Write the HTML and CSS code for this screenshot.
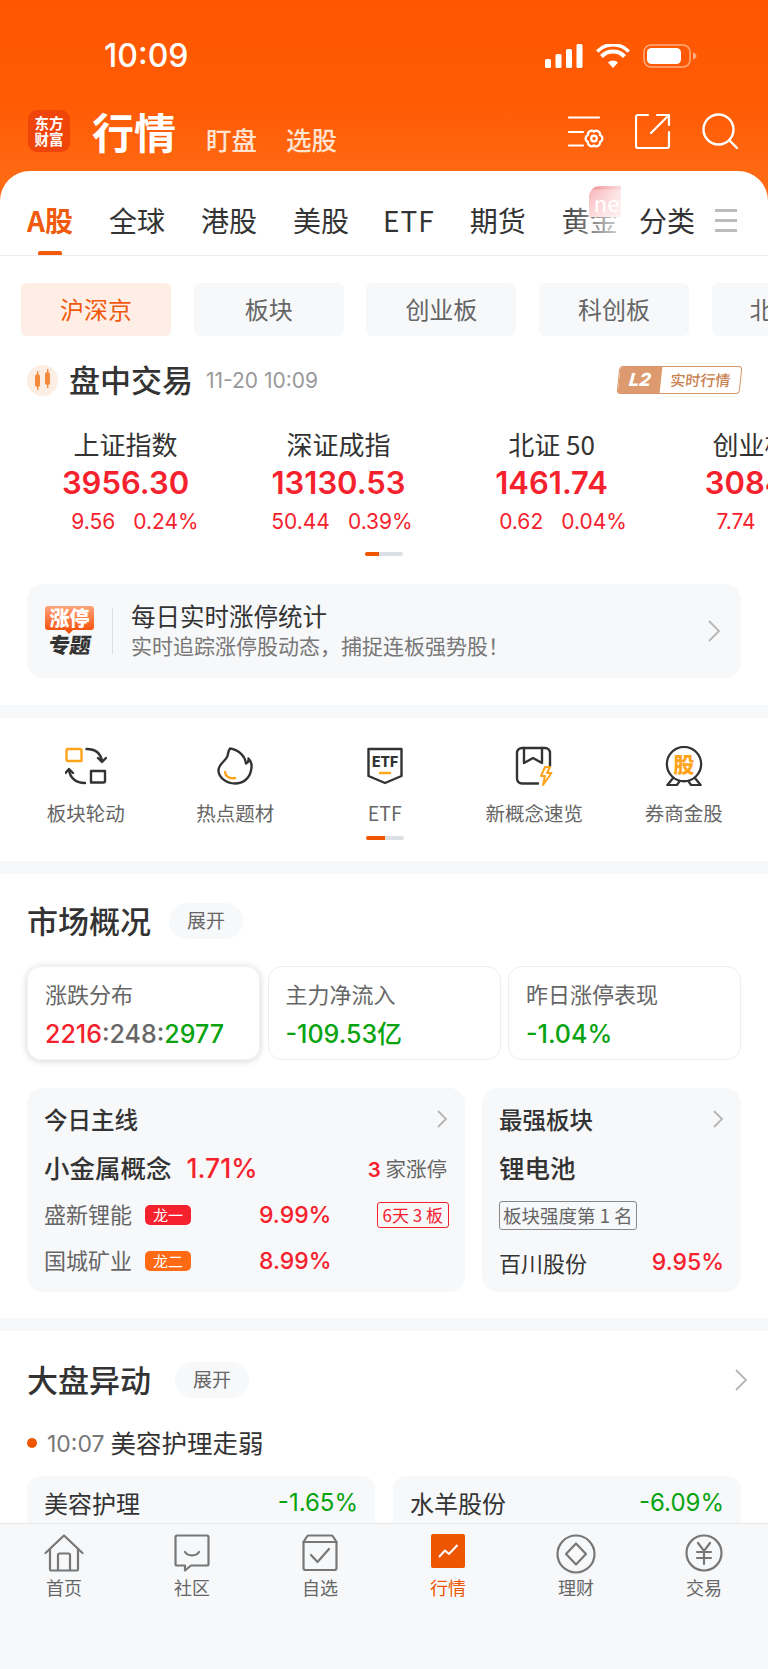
FILE: index.html
```html
<!DOCTYPE html>
<html lang="zh-CN">
<head>
    <meta charset="UTF-8">
    <meta name="viewport" content="width=device-width, initial-scale=1.0">
    <title>行情</title>
    <link rel="stylesheet" href="styles.css">
</head>
<body>
<div class="app">
    <div class="top">
        <div class="status-bar">
            <span class="status-time">10:09</span>
            <div class="status-icons">
                <svg width="38" height="24" viewBox="0 0 38 24"><rect x="0" y="15" width="6" height="9" rx="1.5"/><rect x="10.500" y="10" width="6" height="14" rx="1.500"/><rect x="21" y="5" width="6" height="19" rx="1.500"/><rect x="31.500" y="0" width="6" height="24" rx="1.500"/></svg>
                <svg width="34" height="24" viewBox="0 0 34 24"><path d="M17 24 12 18.500a7 7 0 0 1 10 0Z"/><path d="M5.500 12.500a16 16 0 0 1 23 0" fill="none" stroke="#fff" stroke-width="4"/><path d="M1.200 7.500C10 -1.500 24 -1.500 32.800 7.500" fill="none" stroke="#fff" stroke-width="3.600"/></svg>
                <svg width="54" height="24" viewBox="0 0 54 24"><rect x="1" y="1" width="46" height="22" rx="7" fill="none" stroke="#fff" stroke-opacity=".5" stroke-width="1.500"/><rect x="4" y="4" width="34" height="16" rx="4.500"/><path d="M50 8.500c2.500.7 3.500 2 3.500 3.500s-1 2.800-3.500 3.500Z" fill-opacity=".5"/></svg>
            </div>
        </div>
        <div class="title-bar">
            <div class="logo"><span>东方</span><span>财富</span></div>
            <h1>行情</h1>
            <a class="title-link">盯盘</a>
            <a class="title-link">选股</a>
            <div class="title-icons">
                <svg class="icon-filter" width="36" height="33" viewBox="0 0 36 33" fill="none" stroke="#fff" stroke-width="2.200" stroke-linecap="round"><path d="M1 1.500h30M1 16h14M1 29.500h14"/><path d="M26 15.500A3.800 3.800 0 0 1 32.060 19A3.800 3.800 0 0 1 32.060 26A3.800 3.800 0 0 1 26 29.500A3.800 3.800 0 0 1 19.940 26A3.800 3.800 0 0 1 19.940 19A3.800 3.800 0 0 1 26 15.500Z"/><circle cx="26" cy="22.500" r="2.800"/></svg>
                <svg width="36" height="36" viewBox="0 0 36 36" fill="none" stroke="#fff" stroke-width="2.200" stroke-linecap="round" stroke-linejoin="round"><path d="M13 2H3a2 2 0 0 0-2 2v29a2 2 0 0 0 2 2h29a2 2 0 0 0 2-2V19"/><path d="M16 20 34 2M22 2h12v10" /></svg>
                <svg width="36" height="36" viewBox="0 0 36 36" fill="none" stroke="#fff" stroke-width="2.400" stroke-linecap="round"><circle cx="16.500" cy="16.500" r="15"/><path d="m27.500 27.500 7.500 7.500"/></svg>
            </div>
        </div>
        <div class="tabs">
            <div class="tabs-scroll">
                <div class="tab active">A股<i class="tab-mark"></i></div>
                <div class="tab">全球</div>
                <div class="tab">港股</div>
                <div class="tab">美股</div>
                <div class="tab tab-etf">ETF</div>
                <div class="tab">期货</div>
                <div class="tab tab-gold">黄金<span class="new-badge">new</span></div>
                <div class="tabs-fade"></div>
            </div>
            <div class="tab tab-fixed">分类</div>
            <div class="tab-menu"><i></i><i></i><i></i></div>
        </div>
    </div>

    <div class="main">
        <div class="chips">
            <div class="chip active">沪深京</div>
            <div class="chip">板块</div>
            <div class="chip">创业板</div>
            <div class="chip">科创板</div>
            <div class="chip">北证50</div>
        </div>

        <div class="trade-head">
            <div class="trade-icon">
                <svg width="20" height="24" viewBox="0 0 20 24" fill="#f58a3c"><rect x="2" y="6" width="5" height="13" rx="2.500"/><rect x="4" y="3" width="1.400" height="19"/><rect x="12" y="4" width="5" height="13" rx="2.500"/><rect x="14" y="1" width="1.400" height="19"/></svg>
            </div>
            <h2 class="trade-title">盘中交易</h2>
            <span class="trade-time">11-20 10:09</span>
            <div class="l2-badge"><span class="l2-mark">L2</span><span class="l2-text">实时行情</span></div>
        </div>

        <div class="indexes">
            <div class="index">
                <div class="index-name">上证指数</div>
                <div class="index-value">3956.30</div>
                <div class="index-sub shift"><span>9.56</span><span>0.24%</span></div>
            </div>
            <div class="index">
                <div class="index-name">深证成指</div>
                <div class="index-value">13130.53</div>
                <div class="index-sub nudge"><span>50.44</span><span>0.39%</span></div>
            </div>
            <div class="index">
                <div class="index-name">北证 50</div>
                <div class="index-value">1461.74</div>
                <div class="index-sub shift-more"><span>0.62</span><span>0.04%</span></div>
            </div>
            <div class="index">
                <div class="index-name">创业板指</div>
                <div class="index-value">3084.15</div>
                <div class="index-sub far"><span>7.74</span><span>0.25%</span></div>
            </div>
        </div>
        <div class="pager"><i></i></div>

        <div class="banner">
            <div class="banner-tag"><span class="tag-top">涨停</span><span class="tag-bottom">专题</span></div>
            <i class="banner-line"></i>
            <div class="banner-text">
                <div class="banner-title">每日实时涨停统计</div>
                <div class="banner-sub">实时追踪涨停股动态，捕捉连板强势股！</div>
            </div>
            <svg class="chevron" width="14" height="24" viewBox="0 0 14 24"><path d="m2 2 10 10L2 22"/></svg>
        </div>

        <div class="band"></div>

        <div class="shortcuts">
            <div class="shortcut">
                <svg width="42" height="38" viewBox="0 0 42 38" fill="none" stroke="#333" stroke-width="2.400" stroke-linecap="round" stroke-linejoin="round">
                    <path d="M3 2h12a1.500 1.500 0 0 1 1.500 1.500V14H3a1.500 1.500 0 0 1-1.500-1.500V3.500A1.500 1.500 0 0 1 3 2Z" stroke="#ffa31a"/>
                    <path d="M21.500 2c8 0 14 4 15.500 12M33 11l4 4 4-4"/>
                    <path d="M26 24h14v10a1.500 1.500 0 0 1-1.500 1.500H26Z"/>
                    <path d="M20 36C11 36 5 31 4 23M0.500 26 4 22l4 4"/>
                </svg>
                <span>板块轮动</span>
            </div>
            <div class="shortcut">
                <svg width="36" height="38" viewBox="0 0 36 38" fill="none" stroke="#333" stroke-width="2.400" stroke-linecap="round" stroke-linejoin="round">
                    <path d="M13 1.500c8 1 15 7 16 15 2-1 3-3 2.500-5 3 3 3.500 8 2.500 12-1.500 8-8 13-16 13S2 31 1.500 24C1 17 9 14 10.500 9c.6-2.500.5-5 2.500-7.500Z"/>
                    <path d="M8 25c.5 4 3.500 7 10 6" stroke="#ffa31a"/>
                </svg>
                <span>热点题材</span>
            </div>
            <div class="shortcut">
                <svg width="36" height="38" viewBox="0 0 36 38" fill="none" stroke="#333" stroke-width="2.400" stroke-linejoin="round">
                    <path d="M1.500 2h33v27L18 36 1.500 29Z"/>
                    <text x="18" y="20" text-anchor="middle" class="etf-mark">ETF</text>
                    <path d="M12 26h12" stroke="#ffa31a"/>
                </svg>
                <span>ETF</span>
                <i class="short-pager"><i></i></i>
            </div>
            <div class="shortcut">
                <svg width="38" height="40" viewBox="0 0 38 40" fill="none" stroke="#333" stroke-width="2.400" stroke-linecap="round" stroke-linejoin="round">
                    <path d="M23 37.500H7a5 5 0 0 1-5-5V7a5 5 0 0 1 5-5h23a5 5 0 0 1 5 5v13"/>
                    <path d="M9 2v15l9-5 9 5V2"/>
                    <path d="M30 21h5l-3 6h4.500L28 39l2-9h-4Z" stroke="#ffa31a" stroke-width="2"/>
                </svg>
                <span>新概念速览</span>
            </div>
            <div class="shortcut">
                <svg width="40" height="42" viewBox="0 0 40 42" fill="none" stroke="#333" stroke-width="2.400" stroke-linejoin="round">
                    <circle cx="20" cy="19" r="18"/>
                    <path d="M9 33 2.500 41h10l3.500-5M31 33l6.500 8h-10L24 36"/>
                    <text x="20" y="27" text-anchor="middle" class="medal-mark">股</text>
                </svg>
                <span>券商金股</span>
            </div>
        </div>

        <div class="band band-b"></div>

        <section class="market">
            <div class="section-head">
                <h2>市场概况</h2>
                <span class="pill">展开</span>
            </div>
            <div class="stat-row">
                <div class="stat selected">
                    <div class="stat-label">涨跌分布</div>
                    <div class="stat-value"><b class="up">2216</b>:248:<b class="down">2977</b></div>
                </div>
                <div class="stat">
                    <div class="stat-label">主力净流入</div>
                    <div class="stat-value down">-109.53亿</div>
                </div>
                <div class="stat">
                    <div class="stat-label">昨日涨停表现</div>
                    <div class="stat-value down">-1.04%</div>
                </div>
            </div>
            <div class="panels">
                <div class="panel panel-main">
                    <div class="panel-head">今日主线<svg class="chevron small" width="12" height="20" viewBox="0 0 12 20"><path d="m2 2 8 8-8 8"/></svg></div>
                    <div class="main-line">
                        <span class="main-name">小金属概念</span>
                        <span class="main-pct up">1.71%</span>
                        <span class="main-count"><b class="up">3</b> 家涨停</span>
                    </div>
                    <div class="stock-row">
                        <span class="stock-name">盛新锂能</span>
                        <span class="dragon red">龙一</span>
                        <span class="stock-pct up">9.99%</span>
                        <span class="days">6天 3 板</span>
                    </div>
                    <div class="stock-row">
                        <span class="stock-name">国城矿业</span>
                        <span class="dragon orange">龙二</span>
                        <span class="stock-pct up">8.99%</span>
                    </div>
                </div>
                <div class="panel panel-side">
                    <div class="panel-head">最强板块<svg class="chevron small" width="12" height="20" viewBox="0 0 12 20"><path d="m2 2 8 8-8 8"/></svg></div>
                    <div class="main-line"><span class="main-name">锂电池</span></div>
                    <div class="rank">板块强度第 1 名</div>
                    <div class="side-row"><span>百川股份</span><span class="side-pct up">9.95%</span></div>
                </div>
            </div>
        </section>

        <div class="band band-c"></div>

        <section class="moves">
            <div class="section-head">
                <h2>大盘异动</h2>
                <span class="pill">展开</span>
                <svg class="chevron head-chevron" width="14" height="24" viewBox="0 0 14 24"><path d="m2 2 10 10L2 22"/></svg>
            </div>
            <div class="move-line"><i class="dot"></i><span class="move-time">10:07</span><span class="move-text">美容护理走弱</span></div>
            <div class="move-cards">
                <div class="move-card"><span>美容护理</span><span class="down-light">-1.65%</span></div>
                <div class="move-card"><span>水羊股份</span><span class="down-light">-6.09%</span></div>
            </div>
        </section>
    </div>

    <nav class="tabbar">
        <div class="nav-item">
            <svg width="40" height="38" viewBox="0 0 40 38" fill="none" stroke="#777" stroke-width="2.200" stroke-linejoin="round" stroke-linecap="round"><path d="M1.500 19 20 1.500 38.500 19"/><path d="M6 15v20a1.500 1.500 0 0 0 1.500 1.500h25a1.500 1.500 0 0 0 1.500-1.500V15"/><path d="M14 36V21a1.500 1.500 0 0 1 1.500-1.500h9A1.500 1.500 0 0 1 26 21v15"/></svg>
            <span>首页</span>
        </div>
        <div class="nav-item">
            <svg width="36" height="38" viewBox="0 0 36 38" fill="none" stroke="#777" stroke-width="2.200" stroke-linejoin="round" stroke-linecap="round"><path d="M3 1.500h30A1.500 1.500 0 0 1 34.500 3v27a1.500 1.500 0 0 1-1.500 1.500H17l-6 5v-5H3A1.500 1.500 0 0 1 1.500 30V3A1.500 1.500 0 0 1 3 1.500Z"/><path d="M11 18c3 4.500 11 4.500 14 0"/></svg>
            <span>社区</span>
        </div>
        <div class="nav-item">
            <svg width="36" height="38" viewBox="0 0 36 38" fill="none" stroke="#777" stroke-width="2.200" stroke-linejoin="round" stroke-linecap="round"><path d="M1.500 8 5 2.500a2 2 0 0 1 1.500-1h23a2 2 0 0 1 1.500 1L34.500 8v26a2 2 0 0 1-2 2h-29a2 2 0 0 1-2-2Z"/><path d="M1.500 8h33"/><path d="m9 21 6.500 7L27 15"/></svg>
            <span>自选</span>
        </div>
        <div class="nav-item active">
            <svg width="34" height="34" viewBox="0 0 34 34"><rect width="34" height="34" rx="2" fill="#ee5500"/><path d="m8 23 6-6.500 4 3.500 8.500-9" fill="none" stroke="#fff" stroke-width="2" stroke-linejoin="round"/></svg>
            <span>行情</span>
        </div>
        <div class="nav-item">
            <svg width="40" height="40" viewBox="0 0 40 40" fill="none" stroke="#777" stroke-width="2.200" stroke-linejoin="round"><circle cx="20" cy="20" r="18.500"/><path d="m20 9.500 10 10.500-10 10.500L10 20Z"/></svg>
            <span>理财</span>
        </div>
        <div class="nav-item">
            <svg width="38" height="38" viewBox="0 0 38 38" fill="none" stroke="#777" stroke-width="2.200" stroke-linecap="round"><circle cx="19" cy="19" r="17.500"/><path d="m13 9 6 8 6-8M12 18h14M12 24h14M19 17v13"/></svg>
            <span>交易</span>
        </div>
    </nav>
</div>
</body>
</html>
```

FILE: styles.css
```css
* {
    box-sizing: border-box;
}
body {
    margin: 0;
    background: #fff;
    font-family: "Noto Sans CJK SC", "Noto Sans", sans-serif;
    color: #333;
}
h1, h2 {
    margin: 0;
}
.app {
    width: 768px;
    height: 1669px;
    display: flex;
    flex-direction: column;
    overflow: hidden;
}

/* top orange area */
.top {
    background: linear-gradient(180deg, #ff5700 0%, #ff5a04 40%, #ff7a22 100%);
    height: 256px;
    flex: none;
}
.status-bar {
    height: 92px;
    padding: 44px 71px 0 104px;
    display: flex;
    justify-content: space-between;
    color: #fff;
}
.status-time {
    font-family: Inter, sans-serif;
    font-size: 32px;
    font-weight: 500;
    line-height: 24px;
}
.status-icons {
    display: flex;
    gap: 13px;
    fill: #fff;
}
.title-bar {
    height: 79px;
    padding: 18px 30px 0 28px;
    display: flex;
    align-items: flex-start;
    color: #fff;
}
.logo {
    width: 42px;
    height: 42px;
    background: #f0450a;
    border-radius: 9px;
    display: flex;
    flex-direction: column;
    align-items: center;
    justify-content: center;
    font-size: 14.500px;
    line-height: 16px;
    font-weight: 700;
}
.title-bar h1 {
    font-size: 42px;
    line-height: 42px;
    font-weight: 700;
    margin-left: 22px;
}
.title-link {
    font-size: 25.500px;
    line-height: 30px;
    font-weight: 500;
    color: #ffe3d0;
    margin: 14px 0 0 30px;
}
.title-link + .title-link {
    margin-left: 29px;
}
.title-icons {
    margin-left: auto;
    padding-top: 3px;
    display: flex;
    gap: 31px;
    align-items: flex-start;
}
.icon-filter {
    margin-top: 3px;
}
.tabs {
    height: 85px;
    background: #fff;
    border-radius: 30px 30px 0 0;
    border-bottom: 1px solid #ececec;
    padding: 32px 31px 0 27px;
    display: flex;
    align-items: flex-start;
}
.tabs-scroll {
    width: 594px;
    display: flex;
    gap: 36px;
    position: relative;
    height: 52px;
    clip-path: inset(-40px 0 0 0);
}
.tab {
    font-size: 28px;
    line-height: 34px;
    color: #333;
    display: flex;
    flex-direction: column;
    align-items: center;
    flex: none;
}
.tab-etf {
    margin: 0 -1px 0 -2px;
    letter-spacing: 1px;
}
.tab-fixed {
    margin-left: 18px;
}
.tab.active {
    color: #f15a0c;
    font-weight: 700;
}
.tab-mark {
    width: 24px;
    height: 4px;
    margin-top: 14px;
    background: #f15a0c;
    border-radius: 2px 2px 0 0;
}
.tab-gold {
    position: relative;
}
.new-badge {
    position: absolute;
    left: 27px;
    top: -17px;
    width: 50px;
    height: 31px;
    padding-left: 5px;
    font-size: 22px;
    line-height: 33px;
    color: #fff;
    background: linear-gradient(180deg, #e94b55 0, #e94b55 3px, #f58a92 4px, #fbc6c8 100%);
    border-radius: 11px 0 11px 0;
    overflow: hidden;
}
.tabs-fade {
    position: absolute;
    left: 534px;
    top: -32px;
    width: 60px;
    height: 84px;
    background: linear-gradient(90deg, rgba(255,255,255,0), rgba(255,255,255,.8) 100%);
}
.tab-menu {
    margin-left: 20px;
    width: 22px;
    padding-top: 6px;
    display: flex;
    flex-direction: column;
    gap: 7px;
}
.tab-menu i {
    height: 3px;
    background: #bbb;
}

/* main scroll area */
.main {
    flex: 1;
    min-height: 0;
    overflow: hidden;
    position: relative;
}
.chips {
    display: flex;
    gap: 22.700px;
    padding: 27px 0 0 21px;
    white-space: nowrap;
}
.chip {
    flex: none;
    width: 150px;
    height: 53px;
    background: #f7f8fa;
    border-radius: 6px;
    text-align: center;
    font-size: 24px;
    line-height: 52px;
    color: #666;
}
.chip.active {
    background: #ffeee6;
    color: #f15a0c;
}
.trade-head {
    display: flex;
    align-items: center;
    height: 44px;
    margin-top: 22px;
    padding: 0 27px;
}
.trade-icon {
    width: 31px;
    height: 31px;
    border-radius: 50%;
    background: #fdeee3;
    display: flex;
    align-items: center;
    justify-content: center;
}
.trade-title {
    font-size: 31px;
    font-weight: 500;
    margin-left: 11px;
    padding-bottom: 4px;
}
.trade-time {
    font-family: Inter, sans-serif;
    font-size: 21px;
    color: #999;
    margin-left: 13px;
}
.l2-badge {
    margin-left: auto;
    width: 123px;
    height: 28px;
    display: flex;
    border: 1px solid #d9966a;
    border-radius: 4px;
    transform: skewX(-6deg);
    overflow: hidden;
}
.l2-mark {
    width: 42px;
    background: #dc9a6e;
    color: #fff;
    font-family: Inter, sans-serif;
    font-size: 18px;
    font-weight: 800;
    font-style: italic;
    line-height: 26px;
    text-align: center;
}
.l2-text {
    flex: 1;
    color: #c97f4f;
    font-size: 15px;
    font-weight: 500;
    line-height: 26px;
    text-align: center;
}
.indexes {
    display: flex;
    margin-top: 25px;
    padding-left: 19px;
}
.index {
    flex: 0 0 213px;
    text-align: center;
    white-space: nowrap;
}
.index-name {
    font-size: 26px;
    line-height: 34px;
}
.index-value {
    font-family: Inter, sans-serif;
    font-size: 31px;
    font-weight: 600;
    line-height: 40px;
    margin-top: 2px;
    color: #f5222d;
}
.index-sub {
    font-family: Inter, sans-serif;
    font-size: 21px;
    line-height: 30px;
    margin-top: 4px;
    color: #f5222d;
    display: flex;
    justify-content: center;
    gap: 18px;
}
.index-sub.shift {
    padding-left: 19px;
}
.index-sub.nudge {
    padding-left: 7px;
}
.index-sub.shift-more {
    padding-left: 23px;
}
.index-sub.far {
    padding-left: 26px;
}
.pager {
    width: 38px;
    height: 4px;
    border-radius: 2px;
    margin: 15px auto 0;
    background: #dcdfe4;
    overflow: hidden;
}
.pager i {
    display: block;
    width: 14px;
    height: 4px;
    background: #ee5500;
}
.banner {
    margin: 28px 27px 0;
    height: 94px;
    background: #f7f8fa;
    border-radius: 16px;
    display: flex;
    align-items: center;
    padding: 0 20px 0 18px;
}
.banner-tag {
    width: 49px;
    display: flex;
    flex-direction: column;
    align-items: center;
    font-weight: 900;
}
.tag-top {
    position: relative;
    width: 49px;
    height: 24px;
    background: linear-gradient(180deg, #ffa37a, #f5540f);
    border-radius: 3px;
    color: #fff;
    font-size: 20px;
    line-height: 24px;
    text-align: center;
}
.tag-top::after {
    content: "";
    position: absolute;
    left: 20px;
    bottom: -4px;
    border: 4px solid transparent;
    border-top-color: #f5540f;
    border-bottom: 0;
}
.tag-bottom {
    font-size: 21px;
    line-height: 24px;
    margin-top: 2px;
    color: #333;
    transform: skewX(-8deg);
}
.banner-line {
    width: 1px;
    height: 46px;
    margin: 0 18px;
    background: #ddd;
}
.banner-text {
    flex: 1;
    display: flex;
    flex-direction: column;
    padding-bottom: 3px;
}
.banner-title {
    font-size: 24.500px;
    line-height: 31px;
    color: #333;
}
.banner-sub {
    font-size: 21px;
    line-height: 28px;
    color: #777;
    white-space: nowrap;
}
.chevron {
    fill: none;
    stroke: #b5b5b5;
    stroke-width: 1.800;
    flex: none;
}
.band {
    height: 13px;
    margin-top: 27px;
    background: #f7f8fa;
}
.shortcuts {
    display: flex;
    height: 143px;
    padding-left: 11px;
    padding-top: 28px;
}
.shortcut {
    flex: 0 0 149.500px;
    display: flex;
    flex-direction: column;
    align-items: center;
    font-size: 19.500px;
    line-height: 28px;
    color: #666;
}
.shortcut svg {
    height: 40px;
    margin-bottom: 13px;
}
.etf-mark {
    font-family: Inter, sans-serif;
    font-size: 14px;
    font-weight: 800;
    fill: #333;
    stroke: none;
}
.medal-mark {
    font-size: 22px;
    font-weight: 900;
    fill: #ffa31a;
    stroke: none;
}
.short-pager {
    width: 38px;
    height: 4px;
    margin-top: 9px;
    background: #dcdfe4;
    border-radius: 2px;
    overflow: hidden;
}
.short-pager i {
    display: block;
    width: 19px;
    height: 4px;
    background: #ee5500;
}
.band-b {
    margin-top: 0;
}

/* market */
.market {
    padding: 29px 27px 0;
}
.section-head {
    display: flex;
    align-items: center;
    height: 36px;
}
.section-head h2 {
    font-size: 31px;
    font-weight: 500;
    padding-bottom: 4px;
}
.pill {
    width: 74px;
    height: 36px;
    border-radius: 18px;
    margin-left: 18px;
    background: #f7f8fa;
    color: #666;
    font-size: 19px;
    line-height: 34px;
    text-align: center;
}
.stat-row {
    display: flex;
    gap: 7.500px;
    margin-top: 27px;
}
.stat {
    flex: 1;
    height: 94px;
    border: 1px solid #eceef0;
    border-radius: 14px;
    padding: 10px 17px 0;
}
.stat.selected {
    border-color: #f2f2f2;
    box-shadow: 0 1px 7px rgba(0, 0, 0, .18);
}
.stat-label {
    font-size: 22px;
    line-height: 32px;
    color: #666;
}
.stat-value {
    font-family: Inter, "Noto Sans CJK SC", sans-serif;
    font-size: 25px;
    font-weight: 500;
    line-height: 34px;
    margin-top: 8px;
    color: #666;
    white-space: nowrap;
}
.stat-value b {
    font-weight: 500;
}
.up {
    color: #f5222d;
}
.stat-value.down, .down {
    color: #08a30f;
}
.panels {
    display: flex;
    gap: 17px;
    margin-top: 28px;
    height: 204px;
}
.panel {
    background: #f7f8fa;
    border-radius: 16px;
    padding: 13px 17px 0;
}
.panel-main {
    width: 438px;
}
.panel-side {
    width: 259px;
}
.panel-head {
    display: flex;
    justify-content: space-between;
    align-items: center;
    font-size: 23.500px;
    font-weight: 500;
    line-height: 36px;
}
.main-line {
    display: flex;
    align-items: center;
    margin-top: 12px;
    height: 38px;
}
.main-name {
    font-size: 25.500px;
    font-weight: 500;
    padding-bottom: 4px;
}
.main-pct {
    font-family: Inter, sans-serif;
    font-size: 26.500px;
    font-weight: 500;
    margin-left: 15px;
}
.main-count {
    margin-left: auto;
    margin-right: 1px;
    font-size: 20.500px;
    color: #666;
}
.main-count b {
    font-family: Inter, sans-serif;
    font-weight: 600;
}
.stock-row {
    display: flex;
    align-items: center;
    height: 32px;
    margin-top: 12px;
}
.stock-row + .stock-row {
    margin-top: 14px;
}
.stock-name {
    width: 88px;
    font-size: 22px;
    color: #666;
    padding-bottom: 4px;
}
.dragon {
    width: 46px;
    height: 20px;
    margin-left: 13px;
    border-radius: 5px;
    font-size: 15px;
    line-height: 19px;
    text-align: center;
    color: #fff;
}
.dragon.red {
    background: #f5222d;
}
.dragon.orange {
    background: #ff6a14;
}
.stock-pct {
    margin-left: 68px;
    font-family: Inter, sans-serif;
    font-size: 23px;
    font-weight: 500;
    white-space: nowrap;
}
.days {
    margin-left: auto;
    margin-right: -1px;
    height: 26px;
    padding: 0 5px;
    border: 1px solid #f5222d;
    border-radius: 3px;
    color: #f5222d;
    font-size: 17px;
    line-height: 23px;
    white-space: nowrap;
}
.rank {
    display: inline-block;
    margin-top: 14px;
    height: 29px;
    padding: 0 3px;
    border: 1px solid #888;
    border-radius: 3px;
    font-size: 18.500px;
    line-height: 26px;
    color: #666;
    white-space: nowrap;
}
.side-row {
    display: flex;
    justify-content: space-between;
    align-items: center;
    margin-top: 16px;
    font-size: 22px;
    line-height: 32px;
    color: #333;
}
.side-pct {
    font-family: Inter, sans-serif;
    font-size: 23px;
    font-weight: 500;
}
.band-c {
    margin-top: 26px;
}

/* moves */
.moves {
    padding: 31px 27px 0;
}
.moves .pill {
    margin-left: 24px;
}
.head-chevron {
    margin-left: auto;
    margin-right: -7px;
}
.move-line {
    display: flex;
    align-items: center;
    margin-top: 27px;
    height: 36px;
    font-size: 25.500px;
}
.dot {
    width: 10px;
    height: 10px;
    border-radius: 50%;
    background: #ee5500;
    margin-right: 10px;
}
.move-time {
    font-family: Inter, sans-serif;
    font-size: 23px;
    color: #777;
    margin-right: 6px;
    padding-top: 1px;
}
.move-text {
    padding-bottom: 3px;
}
.move-cards {
    display: flex;
    gap: 18px;
    margin-top: 15px;
}
.move-card {
    flex: 1;
    height: 90px;
    padding: 9px 17px 0;
    display: flex;
    justify-content: space-between;
    background: #f7f8fa;
    border-radius: 14px;
    font-size: 24px;
    line-height: 36px;
}
.down-light {
    font-family: Inter, sans-serif;
    color: #08a30f;
}

/* bottom nav */
.tabbar {
    flex: none;
    height: 146px;
    display: flex;
    background: #f7f8fa;
    border-top: 1px solid #e8e8e8;
    padding-top: 9px;
}
.nav-item {
    flex: 0 0 128px;
    height: 66px;
    display: flex;
    flex-direction: column;
    align-items: center;
    justify-content: space-between;
    font-size: 18px;
    line-height: 24px;
    color: #666;
}
.nav-item svg {
    margin-top: 1px;
}
.nav-item.active {
    color: #ee5500;
}
```
